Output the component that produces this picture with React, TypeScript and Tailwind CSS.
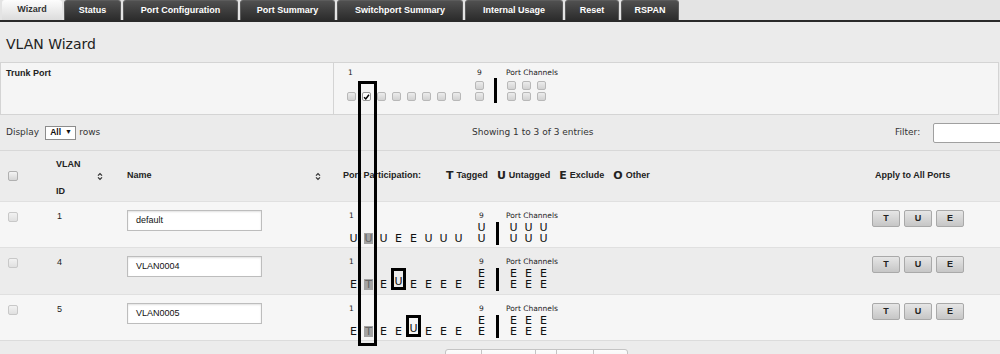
import React from 'react';

const tabs = [
  { name: 'Wizard', w: 'w-[60px]', active: true },
  { name: 'Status', w: 'w-[57px]' },
  { name: 'Port Configuration', w: 'w-[115px]' },
  { name: 'Port Summary', w: 'w-[95px]' },
  { name: 'Switchport Summary', w: 'w-[126px]' },
  { name: 'Internal Usage', w: 'w-[98px]' },
  { name: 'Reset', w: 'w-[54px]' },
  { name: 'RSPAN', w: 'w-[58px]' },
];

const E3 = [
  ['E', 'E', 'E'],
  ['E', 'E', 'E'],
];

const vlans = [
  {
    id: '1',
    name: 'default',
    ports: ['U', 'U', 'U', 'E', 'E', 'U', 'U', 'U'],
    p9: ['U', 'U'],
    ch: [
      ['U', 'U', 'U'],
      ['U', 'U', 'U'],
    ],
    box: -1,
    bg: 'bg-[#f6f6f6]',
  },
  {
    id: '4',
    name: 'VLAN0004',
    ports: ['E', 'T', 'E', 'U', 'E', 'E', 'E', 'E'],
    p9: ['E', 'E'],
    ch: E3,
    box: 3,
    bg: 'bg-[#ececec]',
  },
  {
    id: '5',
    name: 'VLAN0005',
    ports: ['E', 'T', 'E', 'E', 'U', 'E', 'E', 'E'],
    p9: ['E', 'E'],
    ch: E3,
    box: 4,
    bg: 'bg-[#f6f6f6]',
  },
];

const portCols = ['col-start-1', 'col-start-2', 'col-start-3', 'col-start-4', 'col-start-5', 'col-start-6', 'col-start-7', 'col-start-8'];
const chCols = ['col-start-14', 'col-start-15', 'col-start-16'];

const gridCols = 'grid grid-cols-[repeat(8,15px)_8px_15px_7px_3px_7px_repeat(3,15px)]';
const dejavu = "font-['DejaVu_Sans',sans-serif]";

const SortIcon = () => (
  <svg width="6" height="9" viewBox="0 0 6 9" fill="none" stroke="#333" strokeWidth="1.3">
    <path d="M1 3.6 L3 1.6 L5 3.6" />
    <path d="M1 5.4 L3 7.4 L5 5.4" />
  </svg>
);

const Check = ({ light }: { light?: boolean }) => (
  <div
    className={`w-[10px] h-[10px] rounded-[2px] border ${
      light ? 'border-[#c8c8c8] from-[#f2f2f2] to-[#e0e0e0]' : 'border-[#b0b0b0] from-[#f4f4f4] to-[#d6d6d6]'
    } bg-linear-to-b`}
  />
);

const PortBox = ({ checked }: { checked?: boolean }) => (
  <div
    className={`w-[9px] h-[9px] rounded-[2px] border flex items-center justify-center ${
      checked ? 'bg-white border-[#999]' : 'border-[#b8b8b8] bg-linear-to-b from-[#ececec] to-[#d2d2d2]'
    }`}
  >
    {checked && (
      <svg width="8" height="8" viewBox="0 0 8 8" fill="none" stroke="#000" strokeWidth="1.7">
        <path d="M1.2 4.2 L3.2 6.2 L6.8 1.5" />
      </svg>
    )}
  </div>
);

const Letter = ({ ch, hl }: { ch: string; hl?: boolean }) => (
  <div className="flex justify-center">
    <span
      className={`${dejavu} text-[11px] leading-[11px] text-center ${
        hl ? 'w-[9px] bg-[#a3a3a3] text-[#666]' : 'text-[#111]'
      }`}
    >
      {ch}
    </span>
  </div>
);

const Bar = ({ cls }: { cls: string }) => <div className={`col-start-12 bg-black w-[3px] ${cls}`} />;

const Btn = ({ t }: { t: string }) => (
  <div className="w-[28px] h-[17px] rounded-[2px] border border-[#a9a9a9] bg-linear-to-b from-[#e6e6e6] to-[#c6c6c6] flex items-center justify-center text-[9px] font-bold text-[#222]">
    {t}
  </div>
);

export default function App() {
  return (
    <div className="relative w-[1000px] h-[354px] overflow-hidden bg-[#ebebeb] font-['Liberation_Sans',Arial,sans-serif] text-[#222]">
      {/* Tabs */}
      <div className="h-[22px] bg-[#e4e4e4] border-b-2 border-[#2a2a2a] flex items-end gap-[2px] pl-[2px]">
        {tabs.map((t) => (
          <div
            key={t.name}
            className={`${t.w} h-[20px] shrink-0 rounded-t-[3px] flex items-center justify-center text-[9px] font-bold ${
              t.active
                ? 'bg-linear-to-b from-[#fdfdfd] to-[#dcdcdc] text-[#333]'
                : 'bg-linear-to-b from-[#505050] to-[#2c2c2c] border-x border-t border-[#5c5c5c] text-white'
            }`}
          >
            {t.name}
          </div>
        ))}
      </div>

      {/* Title */}
      <div className="h-[40px] pl-[6px] pt-[14px]">
        <h1 className={`${dejavu} text-[14px] leading-[16px] text-[#222]`}>VLAN Wizard</h1>
      </div>

      {/* Trunk port */}
      <div className="h-[53px] flex border border-[#d4d4d4] bg-[#f5f5f5] mr-[1px]">
        <div className="w-[332px] shrink-0 pl-[5px] pt-[5px] text-[9px] font-bold leading-[11px]">Trunk Port</div>
        <div className="flex-1 border-l border-[#d4d4d4] pl-[10px] pt-[5px]">
          <div className={`${gridCols} grid-rows-[9px_4px_9px_2px_9px]`}>
            <div className={`col-start-1 row-start-1 pl-[4px] ${dejavu} text-[7.5px] leading-[9px] whitespace-nowrap`}>1</div>
            <div className={`col-start-10 row-start-1 text-center ${dejavu} text-[7.5px] leading-[9px]`}>9</div>
            <div className={`col-start-14 col-span-3 row-start-1 pl-[2px] ${dejavu} text-[7.5px] leading-[9px] whitespace-nowrap`}>
              Port Channels
            </div>
            {portCols.map((c, i) => (
              <div key={c} className={`${c} row-start-5 flex justify-center`}>
                <PortBox checked={i === 1} />
              </div>
            ))}
            <div className="col-start-10 row-start-3 flex justify-center">
              <PortBox />
            </div>
            <div className="col-start-10 row-start-5 flex justify-center">
              <PortBox />
            </div>
            <Bar cls="row-start-2 row-end-6 mt-[1px] -mb-[2px]" />
            {chCols.map((c) => (
              <React.Fragment key={c}>
                <div className={`${c} row-start-3 flex justify-center`}>
                  <PortBox />
                </div>
                <div className={`${c} row-start-5 flex justify-center`}>
                  <PortBox />
                </div>
              </React.Fragment>
            ))}
          </div>
        </div>
      </div>

      {/* Display / Filter */}
      <div className={`h-[35px] flex items-center ${dejavu} text-[9px] text-[#333]`}>
        <div className="w-[472px] shrink-0 pl-[6px] flex items-center">
          <span>Display</span>
          <div className="ml-[6px] w-[31px] h-[14px] border border-[#8c8c8c] bg-white flex items-center pl-[4px] gap-[4px] font-['Liberation_Sans',sans-serif] font-bold text-[8.5px] text-[#111]">
            <span>All</span>
            <span className="text-[7px]">▼</span>
          </div>
          <span className="ml-[3px]">rows</span>
        </div>
        <div className="w-[423px] shrink-0">Showing 1 to 3 of 3 entries</div>
        <div className="shrink-0 flex items-center">
          <span>Filter:</span>
          <div className="ml-[13px] w-[80px] h-[20px] border border-[#a0a0a0] bg-white rounded-[2px]" />
        </div>
      </div>

      {/* Header */}
      <div className="h-[51px] flex border-t border-[#d8d8d8] bg-[#ececec] text-[9px] font-bold">
        <div className="w-[46px] shrink-0 pl-[8px] flex items-center">
          <Check />
        </div>
        <div className="w-[71px] shrink-0 pl-[10px] pr-[14px] flex justify-between">
          <div className="leading-[27px]">
            <div>VLAN</div>
            <div>ID</div>
          </div>
          <div className="flex items-center">
            <SortIcon />
          </div>
        </div>
        <div className="w-[216px] shrink-0 pl-[10px] pr-[12px] flex items-center justify-between">
          <span>Name</span>
          <SortIcon />
        </div>
        <div className="w-[532px] shrink-0 pl-[10px] flex items-center">
          <span>Port Participation:</span>
          <div className="ml-[25px] flex items-center gap-[9px]">
            {[
              ['T', 'Tagged'],
              ['U', 'Untagged'],
              ['E', 'Exclude'],
              ['O', 'Other'],
            ].map(([k, v]) => (
              <div key={k} className="flex items-center gap-[3px]">
                <span className={`${dejavu} text-[11px] font-bold`}>{k}</span>
                <span>{v}</span>
              </div>
            ))}
          </div>
        </div>
        <div className="flex-1 pl-[10px] flex items-center">Apply to All Ports</div>
      </div>

      {/* Rows */}
      {vlans.map((v, ri) => (
        <div key={v.id} className={`${ri === 1 ? 'h-[47px]' : 'h-[46px]'} flex border-t border-[#e0e0e0] ${v.bg}`}>
          <div className="w-[46px] shrink-0 pl-[8px] pt-[10px]">
            <Check light />
          </div>
          <div className="w-[71px] shrink-0 pl-[11px] pt-[9px] text-[9px] leading-[11px]">{v.id}</div>
          <div className="w-[216px] shrink-0 pl-[10px] pt-[8px]">
            <div className="w-[135px] h-[21px] border border-[#bdbdbd] bg-white shadow-[inset_0_1px_2px_rgba(0,0,0,0.12)] pl-[8px] flex items-center text-[9px] text-[#111]">
              {v.name}
            </div>
          </div>
          <div className="w-[532px] shrink-0 pl-[13px] pt-[9px]">
            <div className={`${gridCols} grid-rows-[9px_2px_11px_11px]`}>
              <div className={`col-start-1 row-start-1 pl-[3px] ${dejavu} text-[7.5px] leading-[9px]`}>1</div>
              <div className={`col-start-10 row-start-1 text-center ${dejavu} text-[7.5px] leading-[9px]`}>9</div>
              <div className={`col-start-14 col-span-3 row-start-1 ${dejavu} text-[7.5px] leading-[9px] whitespace-nowrap`}>
                Port Channels
              </div>
              {v.ports.map((p, i) =>
                i === v.box ? (
                  <div key={i} className={`${portCols[i]} row-start-3 row-end-5 border-[3px] border-black flex items-end justify-center`}>
                    <span className={`${dejavu} text-[11px] leading-[11px] text-[#111]`}>{p}</span>
                  </div>
                ) : (
                  <div key={i} className={`${portCols[i]} row-start-4`}>
                    <Letter ch={p} hl={i === 1} />
                  </div>
                )
              )}
              <div className="col-start-10 row-start-3">
                <Letter ch={v.p9[0]} />
              </div>
              <div className="col-start-10 row-start-4">
                <Letter ch={v.p9[1]} />
              </div>
              <Bar cls="row-start-3 row-end-5 -mb-[1px]" />
              {chCols.map((c, i) => (
                <React.Fragment key={c}>
                  <div className={`${c} row-start-3`}>
                    <Letter ch={v.ch[0][i]} />
                  </div>
                  <div className={`${c} row-start-4`}>
                    <Letter ch={v.ch[1][i]} />
                  </div>
                </React.Fragment>
              ))}
            </div>
          </div>
          <div className="flex-1 pl-[7px] pt-[8px] flex items-start gap-[4px]">
            <Btn t="T" />
            <Btn t="U" />
            <Btn t="E" />
          </div>
        </div>
      ))}

      {/* Footer / pagination */}
      <div className="h-[40px] border-t border-[#dcdcdc] bg-[#ececec] pt-[8px] pl-[445px] flex items-start">
        {['w-[37px]', 'w-[55px]', 'w-[22px]', 'w-[38px]', 'w-[35px]'].map((w, i) => (
          <div
            key={i}
            className={`${w} h-[20px] border border-[#c4c4c4] bg-linear-to-b from-[#fdfdfd] to-[#e8e8e8] ${
              i > 0 ? '-ml-px' : 'rounded-l-[3px]'
            } ${i === 4 ? 'rounded-r-[3px]' : ''}`}
          />
        ))}
      </div>

      {/* annotation overlay */}
      <div className="absolute left-[358px] top-[81px] w-[19px] h-[265px] border-[3px] border-black pointer-events-none" />
    </div>
  );
}
